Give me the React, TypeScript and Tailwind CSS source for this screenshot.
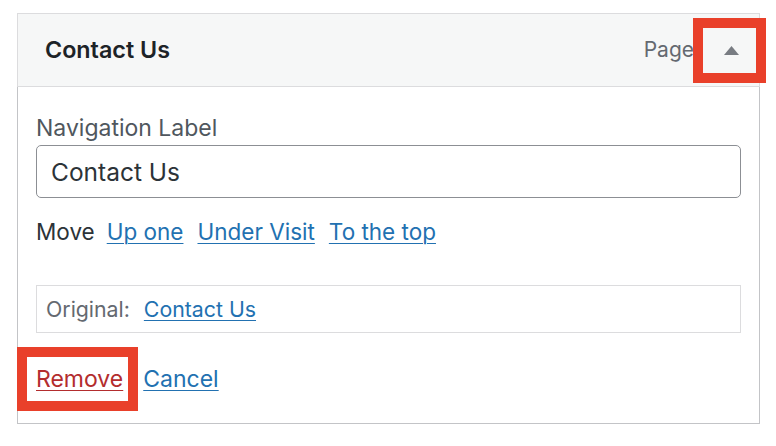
import React from "react";

const linkCls = "text-[#2271b1] underline underline-offset-[3px] decoration-1";

const App = () => {
  return (
    <div
      className="relative w-[776px] h-[446px] bg-white"
      style={{ fontFamily: "Inter, 'Noto Sans', sans-serif" }}
    >
      <div className="absolute left-[17px] top-[13px] w-[743px]">
        {/* handle */}
        <div className="flex items-center justify-between h-[74px] bg-[#f6f7f7] border border-[#dcdcde] pl-[27px] pr-[2px]">
          <span className="text-[23.3px] font-semibold text-[#1d2327]">Contact Us</span>
          <div className="flex items-center h-full">
            <span className="text-[21px] text-[#646970]">Page</span>
            <button className="ml-[11px] w-[52px] h-[46px] flex items-center justify-center">
              <svg width="15" height="9" viewBox="0 0 15 9">
                <path d="M7.5 0 L15 9 L0 9 Z" fill="#787c82" />
              </svg>
            </button>
          </div>
        </div>

        {/* settings */}
        <div className="border border-t-0 border-[#c3c4c7] px-[18px] pt-[29px] pb-[32px] text-[22.5px] leading-[24px]">
          <label className="block text-[23px] text-[#50575e]">Navigation Label</label>
          <div className="mt-[5px] h-[53px] w-[705px] flex items-center border border-[#8c8f94] rounded-[5px] px-[14px] text-[24.5px] text-[#2c3338]">
            Contact Us
          </div>

          <div className="mt-[22px] flex items-center text-[#2c3338]">
            <span>Move</span>
            <a className={`${linkCls} ml-[12px]`}>Up one</a>
            <a className={`${linkCls} ml-[14px]`}>Under Visit</a>
            <a className={`${linkCls} ml-[14px]`}>To the top</a>
          </div>

          <div className="mt-[41px] h-[48px] w-[705px] flex items-center border border-[#dcdcde] px-[9px] text-[21.3px]">
            <span className="text-[#646970]">Original:</span>
            <a className={`${linkCls} ml-[14px]`}>Contact Us</a>
          </div>

          <div className="mt-[34px] flex items-center text-[23px]">
            <a className="text-[#b32d2e] underline underline-offset-[3px] decoration-1">Remove</a>
            <a className={`${linkCls} ml-[20px]`}>Cancel</a>
          </div>
        </div>
      </div>

      {/* highlight annotations */}
      <div className="absolute left-[693px] top-[18px] w-[73px] h-[65px] border-[10px] border-[#e9402a]" />
      <div className="absolute left-[17px] top-[347px] w-[121px] h-[64px] border-[10px] border-[#e9402a]" />
    </div>
  );
};

export default App;
